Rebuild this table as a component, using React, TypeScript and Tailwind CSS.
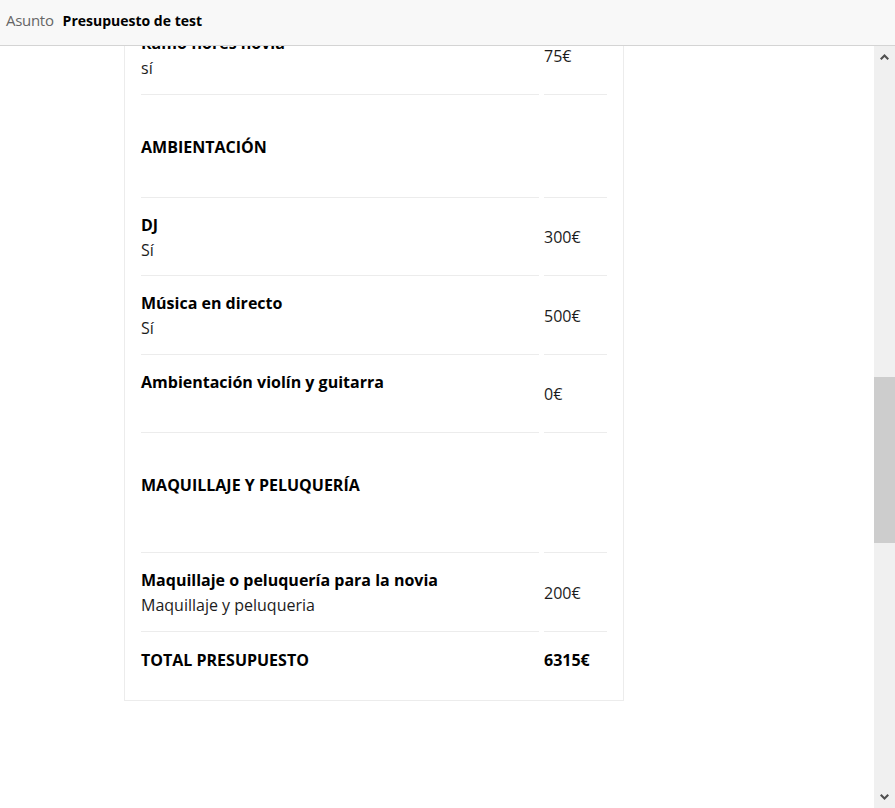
import React from 'react';

type Item = {
  kind: 'item';
  title: string;
  detail: string;
  price: string;
};

type Section = {
  kind: 'section';
  title: string;
  height: string;
};

const rows: (Item | Section)[] = [
  { kind: 'item', title: 'Ramo flores novia', detail: 'sí', price: '75€' },
  { kind: 'section', title: 'AMBIENTACIÓN', height: 'h-[103px]' },
  { kind: 'item', title: 'DJ', detail: 'Sí', price: '300€' },
  { kind: 'item', title: 'Música en directo', detail: 'Sí', price: '500€' },
  { kind: 'item', title: 'Ambientación violín y guitarra', detail: '', price: '0€' },
  { kind: 'section', title: 'MAQUILLAJE Y PELUQUERÍA', height: 'h-[120px]' },
  { kind: 'item', title: 'Maquillaje o peluquería para la novia', detail: 'Maquillaje y peluqueria', price: '200€' },
];

const ItemRow: React.FC<{ item: Item }> = ({ item }) => (
  <div className="flex gap-[5px]">
    <div className="w-[398px] border-b border-[#ececec] pt-[15px] pb-[12.5px] leading-[25px]">
      <div className="font-bold text-black">{item.title}</div>
      <div className="h-[25px] text-[#1c1c1c]">{item.detail}</div>
    </div>
    <div className="flex flex-1 items-center border-b border-[#ececec] pt-[2px] text-[#1c1c1c]">
      {item.price}
    </div>
  </div>
);

const SectionRow: React.FC<{ section: Section }> = ({ section }) => (
  <div className={`flex gap-[5px] ${section.height}`}>
    <div className="w-[398px] border-b border-[#ececec] pt-[40px] leading-[25px] font-bold text-black">
      {section.title}
    </div>
    <div className="flex-1 border-b border-[#ececec]" />
  </div>
);

const Scrollbar: React.FC = () => (
  <div className="flex w-[21px] flex-col bg-[#f0f0f0]">
    <div className="flex h-[22px] items-center justify-center">
      <svg width="9" height="6" viewBox="0 0 9 6">
        <polygon points="4.5,0 9,4.5 7.5,6 4.5,3 1.5,6 0,4.5" fill="#505050" />
      </svg>
    </div>
    <div className="h-[309px]" />
    <div className="h-[166px] bg-[#cdcdcd]" />
    <div className="flex-1" />
    <div className="flex h-[22px] items-center justify-center">
      <svg width="9" height="6" viewBox="0 0 9 6">
        <polygon points="4.5,6 9,1.5 7.5,0 4.5,3 1.5,0 0,1.5" fill="#505050" />
      </svg>
    </div>
  </div>
);

export default function App() {
  return (
    <div className="flex h-[808px] w-[895px] flex-col overflow-hidden bg-white font-['Open_Sans',sans-serif]">
      <header className="flex h-[46px] shrink-0 items-center gap-[9px] border-b border-[#d4d4d4] bg-[#f8f8f8] px-[6px] pb-[4px] text-[14px]">
        <span className="text-[15px] tracking-[-0.3px] text-[#666]">Asunto</span>
        <span className="font-bold text-black">Presupuesto de test</span>
      </header>

      <div className="flex min-h-0 flex-1">
        <div className="flex-1 overflow-hidden">
          <div className="-mt-[30px] ml-[124px] w-[500px] border-x border-b border-[#ececec] px-[16px] pb-[13px] text-[16px]">
            {rows.map((r, i) =>
              r.kind === 'item' ? <ItemRow key={i} item={r} /> : <SectionRow key={i} section={r} />
            )}
            <div className="flex gap-[5px] pt-[16px] pb-[14px] leading-[25px] font-bold text-black">
              <div className="w-[398px]">TOTAL PRESUPUESTO</div>
              <div className="flex-1">6315€</div>
            </div>
          </div>
        </div>
        <Scrollbar />
      </div>
    </div>
  );
}
